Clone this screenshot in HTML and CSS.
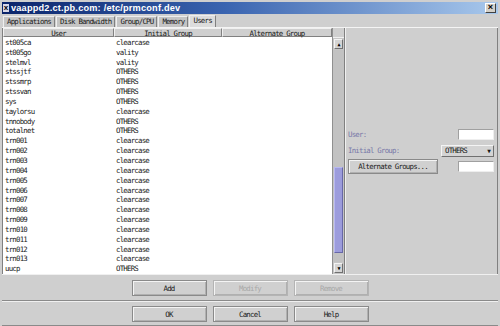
FILE: index.html
```html
<!DOCTYPE html>
<html lang="en">
<head>
    <meta charset="UTF-8">
    <title>vaappd2.ct.pb.com: /etc/prmconf.dev</title>
    <link rel="stylesheet" href="styles.css">
</head>
<body>
    <div class="window">
        <div class="titlebar">
            <span class="app-icon">x</span>
            <span class="title">vaappd2.ct.pb.com: /etc/prmconf.dev</span>
            <span class="close">&times;</span>
        </div>

        <div class="tabs">
            <div class="tab">Applications</div>
            <div class="tab">Disk Bandwidth</div>
            <div class="tab">Group/CPU</div>
            <div class="tab">Memory</div>
            <div class="tab active">Users</div>
        </div>

        <div class="main">
            <div class="list">
                <div class="grid">
                    <div class="head">User</div>
                    <div class="head">Initial Group</div>
                    <div class="head">Alternate Group</div>

                    <div class="cell">st005ca</div><div class="cell">clearcase</div><div class="cell"></div>
                    <div class="cell">st005go</div><div class="cell">vality</div><div class="cell"></div>
                    <div class="cell">stelmvl</div><div class="cell">vality</div><div class="cell"></div>
                    <div class="cell">stssjtf</div><div class="cell">OTHERS</div><div class="cell"></div>
                    <div class="cell">stssmrp</div><div class="cell">OTHERS</div><div class="cell"></div>
                    <div class="cell">stssvan</div><div class="cell">OTHERS</div><div class="cell"></div>
                    <div class="cell">sys</div><div class="cell">OTHERS</div><div class="cell"></div>
                    <div class="cell">taylorsu</div><div class="cell">clearcase</div><div class="cell"></div>
                    <div class="cell">tnnobody</div><div class="cell">OTHERS</div><div class="cell"></div>
                    <div class="cell">totalnet</div><div class="cell">OTHERS</div><div class="cell"></div>
                    <div class="cell">trn001</div><div class="cell">clearcase</div><div class="cell"></div>
                    <div class="cell">trn002</div><div class="cell">clearcase</div><div class="cell"></div>
                    <div class="cell">trn003</div><div class="cell">clearcase</div><div class="cell"></div>
                    <div class="cell">trn004</div><div class="cell">clearcase</div><div class="cell"></div>
                    <div class="cell">trn005</div><div class="cell">clearcase</div><div class="cell"></div>
                    <div class="cell">trn006</div><div class="cell">clearcase</div><div class="cell"></div>
                    <div class="cell">trn007</div><div class="cell">clearcase</div><div class="cell"></div>
                    <div class="cell">trn008</div><div class="cell">clearcase</div><div class="cell"></div>
                    <div class="cell">trn009</div><div class="cell">clearcase</div><div class="cell"></div>
                    <div class="cell">trn010</div><div class="cell">clearcase</div><div class="cell"></div>
                    <div class="cell">trn011</div><div class="cell">clearcase</div><div class="cell"></div>
                    <div class="cell">trn012</div><div class="cell">clearcase</div><div class="cell"></div>
                    <div class="cell">trn013</div><div class="cell">clearcase</div><div class="cell"></div>
                    <div class="cell">uucp</div><div class="cell">OTHERS</div><div class="cell"></div>
                </div>
                <div class="scroll">
                    <div class="scroll-head"></div>
                    <div class="arrow">&#9650;</div>
                    <div class="track">
                        <div class="thumb"></div>
                    </div>
                    <div class="arrow">&#9660;</div>
                </div>
            </div>

            <div class="side">
                <div class="field">
                    <label class="dim">User:</label>
                    <input class="box" type="text">
                </div>
                <div class="field">
                    <label class="dim">Initial Group:</label>
                    <div class="select">OTHERS <span class="caret">&#9660;</span></div>
                </div>
                <div class="field">
                    <button class="btn wide">Alternate Groups...</button>
                    <input class="box" type="text">
                </div>
            </div>
        </div>

        <div class="button-row">
            <button class="btn">Add</button>
            <button class="btn" disabled>Modify</button>
            <button class="btn" disabled>Remove</button>
        </div>
        <div class="button-row footer">
            <button class="btn">OK</button>
            <button class="btn">Cancel</button>
            <button class="btn">Help</button>
        </div>
    </div>
</body>
</html>
```

FILE: styles.css
```css
body {
    margin: 0;
    background: #cfcfcf;
    font-family: "DejaVu Sans Mono", monospace;
    font-size: 7.4px;
    letter-spacing: -0.78px;
    color: #1a1a1a;
}
.window {
    width: 500px;
    height: 326px;
    box-sizing: border-box;
    padding: 2px 2px 0 2px;
    background: #cfcfcf;
    overflow: hidden;
}
.titlebar {
    display: flex;
    align-items: center;
    height: 12px;
    background: linear-gradient(to right, #0a246a, #3a64b0 45%, #a8c8ec);
    color: white;
}
.app-icon {
    width: 6px;
    height: 8px;
    margin: 0 2px 0 1px;
    background: #d8d8e8;
    color: #000;
    font-family: "Liberation Sans", sans-serif;
    font-weight: bold;
    font-size: 8px;
    line-height: 7px;
    text-align: center;
    letter-spacing: 0;
}
.title {
    flex: 1;
    font-family: "Liberation Sans", sans-serif;
    font-weight: bold;
    font-size: 9.2px;
    letter-spacing: 0.2px;
}
.close {
    width: 9px;
    height: 8px;
    margin-right: 2px;
    background: #d4d0c8;
    color: #000;
    border: 1px solid #fff;
    border-right-color: #404040;
    border-bottom-color: #404040;
    font-family: "Liberation Sans", sans-serif;
    font-weight: bold;
    font-size: 9px;
    line-height: 7px;
    text-align: center;
    letter-spacing: 0;
}
.tabs {
    display: flex;
    align-items: flex-end;
    height: 13px;
    padding-left: 1px;
    border-bottom: 1px solid #f4f4f4;
}
.tab {
    height: 10px;
    line-height: 10px;
    padding: 0 3px;
    margin-right: 1px;
    background: #c4c4c4;
    border: 1px solid #eee;
    border-right-color: #808080;
    border-bottom: none;
}
.tab.active {
    height: 11px;
    background: #dcdcdc;
}
.main {
    display: flex;
    height: 246px;
}
.list {
    display: flex;
    width: 342px;
    border-left: 1px solid #808080;
}
.grid {
    display: grid;
    grid-template-columns: 111px 108px 110px;
    grid-auto-rows: 9.85px;
    align-content: start;
    width: 329px;
    background: white;
}
.head {
    height: 9px;
    line-height: 9px;
    text-align: center;
    background: #cfcfcf;
    border: 1px solid #f0f0f0;
    border-right-color: #808080;
    border-bottom-color: #808080;
    box-sizing: border-box;
}
.cell {
    line-height: 9.85px;
    padding-left: 2px;
    white-space: nowrap;
}
.scroll {
    display: flex;
    flex-direction: column;
    width: 12px;
    border-left: 1px solid #909090;
    border-right: 1px solid #808080;
    background: #c6c6c6;
}
.scroll-head {
    height: 9px;
    background: #cfcfcf;
    border-bottom: 1px solid #f0f0f0;
}
.arrow {
    height: 8px;
    margin: 1px 1px;
    font-size: 5px;
    line-height: 8px;
    text-align: center;
    background: #d4d4d4;
    border: 1px solid #f4f4f4;
    border-right-color: #707070;
    border-bottom-color: #707070;
    color: #000;
}
.track {
    flex: 1;
    display: flex;
    flex-direction: column;
    justify-content: flex-end;
    padding: 0 1px 9px;
    background: #c2c2c2;
}
.thumb {
    height: 84px;
    background: #9c9cdc;
    border: 1px solid #b8b8f0;
    border-right-color: #6868a8;
    border-bottom-color: #6868a8;
}
.side {
    flex: 1;
    display: flex;
    flex-direction: column;
    gap: 3px;
    padding: 100px 3px 0 2px;
    border-left: 1px solid #f0f0f0;
    border-right: 1px solid #808080;
}
.field {
    display: flex;
    align-items: center;
    justify-content: space-between;
    height: 13px;
}
.dim {
    color: #7878a8;
}
.box {
    width: 36px;
    height: 11px;
    margin: 0;
    padding: 0;
    box-sizing: border-box;
    background: white;
    border: 1px solid #a0a0a0;
    border-right-color: #eee;
    border-bottom-color: #eee;
}
.select {
    display: flex;
    justify-content: space-between;
    align-items: center;
    width: 53px;
    height: 12px;
    padding: 0 3px;
    box-sizing: border-box;
    background: #d4d4d4;
    border: 1px solid #f4f4f4;
    border-right-color: #707070;
    border-bottom-color: #707070;
}
.caret {
    font-size: 6px;
}
.btn {
    width: 75px;
    height: 16px;
    padding: 0;
    font-family: "DejaVu Sans Mono", monospace;
    font-size: 7.4px;
    letter-spacing: -0.78px;
    color: #1a1a1a;
    background: #d0d0d0;
    border: 1px solid #8a8a8a;
    box-shadow: inset 1px 1px #f4f4f4, inset -1px -1px #b0b0b0;
}
.btn:disabled {
    color: #a8a8a8;
    border-color: #b4b4b4;
}
.btn.wide {
    width: 90px;
    height: 15px;
}
.button-row {
    display: flex;
    justify-content: center;
    gap: 6px;
    padding: 5px 0 4px;
    border-top: 1px solid #f0f0f0;
    border-bottom: 1px solid #8a8a8a;
}
.footer {
    padding: 4px 0 3px;
    border-top: 1px solid #f0f0f0;
}
```
